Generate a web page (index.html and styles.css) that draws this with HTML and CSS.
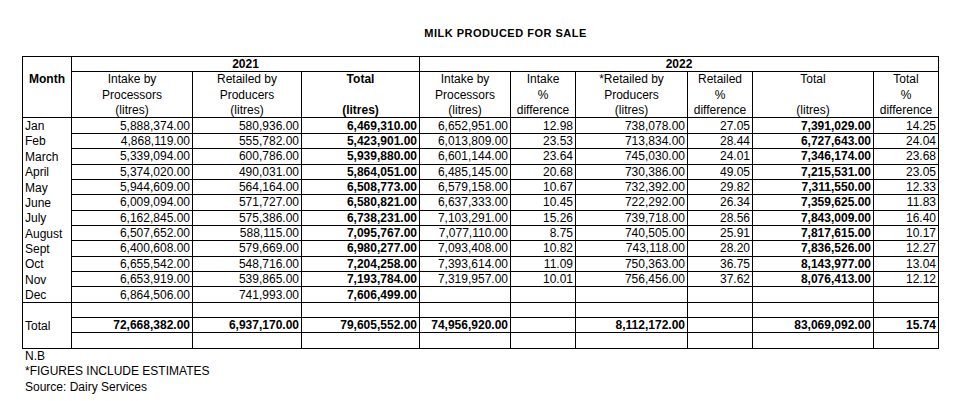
FILE: index.html
```html
<!DOCTYPE html>
<html lang="en">
<head>
<meta charset="utf-8">
<title>Milk Produced for Sale</title>
<link rel="stylesheet" href="styles.css">
</head>
<body>
<div class="page">
  <h1 class="title">MILK PRODUCED FOR SALE</h1>
  <div class="sheet" role="table">
    <div class="c month-head b">Month</div>
    <div class="c year y21">2021</div>
    <div class="c year y22">2022</div>

    <div class="c head">Intake by<br>Processors<br>(litres)</div>
    <div class="c head">Retailed by<br>Producers<br>(litres)</div>
    <div class="c head b">Total<br>&nbsp;<br>(litres)</div>
    <div class="c head">Intake by<br>Processors<br>(litres)</div>
    <div class="c head">Intake<br>%<br>difference</div>
    <div class="c head">*Retailed by<br>Producers<br>(litres)</div>
    <div class="c head">Retailed<br>%<br>difference</div>
    <div class="c head">Total<br>&nbsp;<br>(litres)</div>
    <div class="c head">Total<br>%<br>difference</div>

    <div class="c m">Jan</div><div class="c">5,888,374.00</div><div class="c">580,936.00</div><div class="c b">6,469,310.00</div><div class="c">6,652,951.00</div><div class="c">12.98</div><div class="c">738,078.00</div><div class="c">27.05</div><div class="c b">7,391,029.00</div><div class="c">14.25</div>
    <div class="c m">Feb</div><div class="c">4,868,119.00</div><div class="c">555,782.00</div><div class="c b">5,423,901.00</div><div class="c">6,013,809.00</div><div class="c">23.53</div><div class="c">713,834.00</div><div class="c">28.44</div><div class="c b">6,727,643.00</div><div class="c">24.04</div>
    <div class="c m">March</div><div class="c">5,339,094.00</div><div class="c">600,786.00</div><div class="c b">5,939,880.00</div><div class="c">6,601,144.00</div><div class="c">23.64</div><div class="c">745,030.00</div><div class="c">24.01</div><div class="c b">7,346,174.00</div><div class="c">23.68</div>
    <div class="c m">April</div><div class="c">5,374,020.00</div><div class="c">490,031.00</div><div class="c b">5,864,051.00</div><div class="c">6,485,145.00</div><div class="c">20.68</div><div class="c">730,386.00</div><div class="c">49.05</div><div class="c b">7,215,531.00</div><div class="c">23.05</div>
    <div class="c m">May</div><div class="c">5,944,609.00</div><div class="c">564,164.00</div><div class="c b">6,508,773.00</div><div class="c">6,579,158.00</div><div class="c">10.67</div><div class="c">732,392.00</div><div class="c">29.82</div><div class="c b">7,311,550.00</div><div class="c">12.33</div>
    <div class="c m">June</div><div class="c">6,009,094.00</div><div class="c">571,727.00</div><div class="c b">6,580,821.00</div><div class="c">6,637,333.00</div><div class="c">10.45</div><div class="c">722,292.00</div><div class="c">26.34</div><div class="c b">7,359,625.00</div><div class="c">11.83</div>
    <div class="c m">July</div><div class="c">6,162,845.00</div><div class="c">575,386.00</div><div class="c b">6,738,231.00</div><div class="c">7,103,291.00</div><div class="c">15.26</div><div class="c">739,718.00</div><div class="c">28.56</div><div class="c b">7,843,009.00</div><div class="c">16.40</div>
    <div class="c m">August</div><div class="c">6,507,652.00</div><div class="c">588,115.00</div><div class="c b">7,095,767.00</div><div class="c">7,077,110.00</div><div class="c">8.75</div><div class="c">740,505.00</div><div class="c">25.91</div><div class="c b">7,817,615.00</div><div class="c">10.17</div>
    <div class="c m">Sept</div><div class="c">6,400,608.00</div><div class="c">579,669.00</div><div class="c b">6,980,277.00</div><div class="c">7,093,408.00</div><div class="c">10.82</div><div class="c">743,118.00</div><div class="c">28.20</div><div class="c b">7,836,526.00</div><div class="c">12.27</div>
    <div class="c m">Oct</div><div class="c">6,655,542.00</div><div class="c">548,716.00</div><div class="c b">7,204,258.00</div><div class="c">7,393,614.00</div><div class="c">11.09</div><div class="c">750,363.00</div><div class="c">36.75</div><div class="c b">8,143,977.00</div><div class="c">13.04</div>
    <div class="c m">Nov</div><div class="c">6,653,919.00</div><div class="c">539,865.00</div><div class="c b">7,193,784.00</div><div class="c">7,319,957.00</div><div class="c">10.01</div><div class="c">756,456.00</div><div class="c">37.62</div><div class="c b">8,076,413.00</div><div class="c">12.12</div>
    <div class="c m end">Dec</div><div class="c">6,864,506.00</div><div class="c">741,993.00</div><div class="c b">7,606,499.00</div><div class="c"></div><div class="c"></div><div class="c"></div><div class="c"></div><div class="c"></div><div class="c"></div>

    <div class="c m"></div><div class="c"></div><div class="c"></div><div class="c"></div><div class="c"></div><div class="c"></div><div class="c"></div><div class="c"></div><div class="c"></div><div class="c"></div>

    <div class="c m">Total</div><div class="c b">72,668,382.00</div><div class="c b">6,937,170.00</div><div class="c b">79,605,552.00</div><div class="c b">74,956,920.00</div><div class="c"></div><div class="c b">8,112,172.00</div><div class="c"></div><div class="c b">83,069,092.00</div><div class="c b">15.74</div>

    <div class="c m end"></div><div class="c"></div><div class="c"></div><div class="c"></div><div class="c"></div><div class="c"></div><div class="c"></div><div class="c"></div><div class="c"></div><div class="c"></div>
  </div>
  <div class="notes">
    <p>N.B</p>
    <p>*FIGURES INCLUDE ESTIMATES</p>
    <p>Source: Dairy Services</p>
  </div>
</div>
</body>
</html>
```

FILE: styles.css
```css
*, *::before, *::after {
  box-sizing: border-box;
}

body {
  margin: 0;
  background: #ffffff;
  color: #000000;
  font-family: "Liberation Sans", Arial, sans-serif;
  font-size: 12px;
}

.page {
  padding: 26px 0 0 22px;
}

.title {
  margin: 0 0 16px 50px;
  width: 867px;
  text-align: center;
  font-size: 11px;
  font-weight: bold;
  line-height: 14px;
  letter-spacing: 0.5px;
}

.sheet {
  display: grid;
  grid-template-columns: 49px 121px 109px 118px 91px 65px 112px 65px 121px 65px;
  grid-template-rows: repeat(19, 15.37px);
  width: max-content;
  border-top: 1px solid #000;
  border-left: 1px solid #000;
}

.c {
  display: flex;
  align-items: center;
  justify-content: flex-end;
  padding: 0 2px;
  border-right: 1px solid #000;
  border-bottom: 1px solid #000;
  white-space: nowrap;
  overflow: hidden;
}

.b {
  font-weight: bold;
}

.month-head {
  grid-column: 1;
  grid-row: 1 / span 4;
  display: block;
  padding-top: 15.37px;
  line-height: 15.2px;
  text-align: center;
}

.year {
  grid-row: 1;
  justify-content: center;
  font-weight: bold;
}

.y21 {
  grid-column: 2 / span 3;
}

.y22 {
  grid-column: 5 / span 6;
}

.head {
  grid-row: 2 / span 3;
  display: block;
  line-height: 15.2px;
  text-align: center;
}

.m {
  justify-content: flex-start;
  border-bottom: 0;
}

.m.end {
  border-bottom: 1px solid #000;
}

.notes {
  padding-left: 3px;
  line-height: 15.37px;
}

.notes p {
  margin: 0;
}
```
